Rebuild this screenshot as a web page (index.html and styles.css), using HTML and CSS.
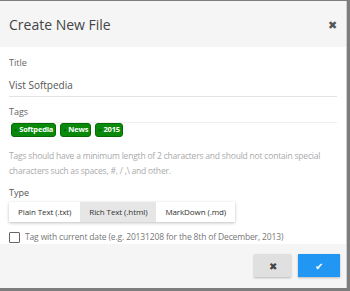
FILE: index.html
```html
<!DOCTYPE html>
<html>
<head>
	<meta charset="utf-8">
	<title>Create New File</title>
	<link rel="stylesheet" href="styles.css">
</head>
<body>
<div class="dialog">
	<div class="dialog-head">
		<h1>Create New File</h1>
		<span class="close">&#10006;</span>
	</div>
	<div class="dialog-body">
		<label class="label">Title</label>
		<div class="input">Vist Softpedia</div>
		<label class="label">Tags</label>
		<div class="tags">
			<span class="tag"><i>&times;</i>Softpedia</span>
			<span class="tag"><i>&times;</i>News</span>
			<span class="tag"><i>&times;</i>2015</span>
		</div>
		<p class="help">Tags should have a minimum length of 2 characters and should not contain special characters such as spaces, #, / ,\ and other.</p>
		<label class="label type">Type</label>
		<div class="btn-group">
			<span class="btn">Plain Text (.txt)</span>
			<span class="btn active">Rich Text (.html)</span>
			<span class="btn">MarkDown (.md)</span>
		</div>
		<div class="check"><span class="box"></span>Tag with current date (e.g. 20131208 for the 8th of December, 2013)</div>
	</div>
	<div class="dialog-foot">
		<span class="fbtn cancel">&#10006;</span>
		<span class="fbtn ok">&#10004;</span>
	</div>
</div>
</body>
</html>
```

FILE: styles.css
```css
body,div,h1,p{margin:0;padding:0;}
body{background:#7d7d7d;font-family:"Open Sans",sans-serif;}
.dialog{width:346px;height:287px;margin-top:1px;background:#fff;border-right:1px solid #d0d0d0;display:flex;flex-direction:column;}
.dialog-head{flex-shrink:0;height:46px;background:#f5f5f5;display:flex;align-items:center;justify-content:space-between;padding:0 9px 0 9px;}
.dialog-head h1{font-size:14px;font-weight:400;color:#444;}
.close{font-size:11px;color:#555;}
.dialog-body{flex:1;padding:9px 9px 0 9px;display:flex;flex-direction:column;}
.label{font-size:9px;line-height:14px;color:#666;}
.input{font-size:10px;line-height:16px;color:#555;padding:7px 0 3px;border-bottom:1px solid #e3e3e3;margin-bottom:8px;}
.tags{display:flex;gap:4px;padding:0 2px;border-top:1px solid #eee;margin-top:3px;}
.tag{background:#0a8a0a;border:1px solid #066b06;border-radius:3px;color:#fff;font-size:7.5px;font-weight:700;padding:0 2px;line-height:11px;letter-spacing:-0.2px;}
.tag i{font-style:normal;color:#045004;margin-right:2px;font-size:6px;}
.help{font-size:8.5px;letter-spacing:-0.2px;line-height:15px;color:#aaa;margin-top:11px;}
.type{margin-top:8px;color:#555;}
.btn-group{display:flex;margin-top:2px;align-self:flex-start;box-shadow:0 1px 3px rgba(0,0,0,.25);}
.btn{font-size:8px;letter-spacing:-0.1px;color:#333;padding:0 9px;line-height:20px;background:#fff;}
.btn.active{background:#e6e6e6;}
.check{display:flex;align-items:center;gap:5px;font-size:8.5px;letter-spacing:-0.15px;line-height:14px;color:#777;margin-top:8px;}
.box{width:9px;height:9px;border:1px solid #666;border-radius:1px;}
.dialog-foot{flex-shrink:0;height:37px;background:#f5f5f5;display:flex;justify-content:flex-end;align-items:flex-start;gap:7px;padding:10px 6px 0 0;}
.fbtn{display:flex;align-items:center;justify-content:center;height:23px;font-size:10px;box-shadow:0 1px 2px rgba(0,0,0,.25);}
.cancel{width:37px;background:#e0e0e0;color:#444;}
.ok{width:42px;background:#2196f3;color:#fff;}
```
